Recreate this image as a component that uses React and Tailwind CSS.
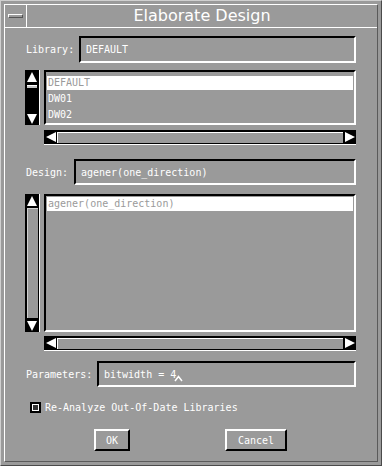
import React from 'react';

const mono = { fontFamily: '"DejaVu Sans Mono", "Liberation Mono", monospace' };

function Arrow({ dir }) {
  const pts = {
    up: '6,1 11,11 1,11',
    down: '1,1 11,1 6,11',
    left: '1,6 11,1 11,11',
    right: '1,1 11,6 1,11',
  }[dir];
  return (
    <svg width="12" height="12" viewBox="0 0 12 12">
      <polygon points={pts} fill="#ffffff" />
    </svg>
  );
}

function Sunken({ className = '', children }) {
  return (
    <div className={`border-2 border-t-black border-l-black border-r-white border-b-white ${className}`}>
      {children}
    </div>
  );
}

function VScroll({ thumb }) {
  return (
    <div className="w-[15px] h-full bg-black border-r border-white flex flex-col items-center">
      <div className="h-[13px] flex items-center justify-center">
        <Arrow dir="up" />
      </div>
      {thumb === 'small' ? (
        <div className="flex-1 w-full flex flex-col items-center pt-[2px]">
          <div className="w-[10px] h-[3px] bg-[#c8c8c8] border-t border-white" />
        </div>
      ) : (
        <div className="flex-1 w-[11px] my-[1px] bg-[#9a9a9a] border-t border-l border-[#cfcfcf]" />
      )}
      <div className="h-[13px] flex items-center justify-center">
        <Arrow dir="down" />
      </div>
    </div>
  );
}

function HScroll() {
  return (
    <div className="ml-[19px] h-[15px] bg-black border-b border-white flex items-center">
      <div className="w-[13px] h-full flex items-center justify-center">
        <Arrow dir="left" />
      </div>
      <div className="flex-1 h-[11px] bg-[#9a9a9a] border-t border-l border-white" />
      <div className="w-[13px] h-full flex items-center justify-center">
        <Arrow dir="right" />
      </div>
    </div>
  );
}

function FieldRow({ label, labelW, value, height, caret }) {
  return (
    <div className="flex items-center">
      <div className="text-white text-[10px] pl-[1px]" style={{ width: labelW }}>
        {label}
      </div>
      <Sunken className="flex-1 flex items-center px-[5px]">
        <div className="flex items-center text-white text-[10px] whitespace-pre" style={{ height: height - 4 }}>
          {value}
          {caret && (
            <svg width="9" height="7" viewBox="0 0 9 7" className="mt-[8px] -ml-[2px]">
              <polyline points="1,6 4.5,1.5 8,6" fill="none" stroke="#ffffff" strokeWidth="1.5" />
            </svg>
          )}
        </div>
      </Sunken>
    </div>
  );
}

function ListBlock({ height, items, thumb, top }) {
  return (
    <div className="flex" style={{ height }}>
      <VScroll thumb={thumb} />
      <Sunken className="ml-[4px] flex-1 px-[1px] overflow-hidden">
        <div style={{ paddingTop: top }}>
          {items.map((it, i) => (
            <div key={i} className="h-[16px] flex items-start">
              <div
                className={`w-full h-[14px] leading-[14px] text-[10px] px-[1px] ${i === 0 ? 'bg-white text-[#9a9a9a]' : 'text-white'}`}
              >
                {it}
              </div>
            </div>
          ))}
        </div>
      </Sunken>
    </div>
  );
}

function Button({ label, width }) {
  return (
    <div
      className="h-[22px] flex items-center justify-center border-2 border-t-white border-l-white border-r-black border-b-black text-white text-[10px]"
      style={{ width }}
    >
      {label}
    </div>
  );
}

export default function App() {
  return (
    <div className="w-[382px] h-[466px] bg-[#9a9a9a] border border-t-[#cfcfcf] border-l-[#cfcfcf] border-r-[#4a4a4a] border-b-[#4a4a4a] p-[3px] overflow-hidden" style={mono}>
      <div className="h-full flex flex-col border border-t-white border-l-white border-r-[#5a5a5a] border-b-[#5a5a5a]">
        <div className="h-[23px] flex border-b border-white">
          <div className="w-[22px] border-r border-white flex items-center justify-center">
            <div className="w-[15px] h-[4px] border border-t-white border-l-white border-r-[#555] border-b-[#555]" />
          </div>
          <div className="flex-1 flex items-center justify-center text-white text-[16px]" style={{ fontFamily: '"DejaVu Sans", "Liberation Sans", sans-serif' }}>
            Elaborate Design
          </div>
        </div>

        <div className="flex-1 flex flex-col pl-[20px] pr-[21px]">
          <div className="mt-[8px]">
            <FieldRow label="Library:" labelW={54} value="DEFAULT" height={27} />
          </div>
          <div className="mt-[7px]">
            <ListBlock height={55} items={['DEFAULT', 'DW01', 'DW02']} thumb="small" top={4} />
          </div>
          <div className="mt-[5px]">
            <HScroll />
          </div>

          <div className="mt-[14px]">
            <FieldRow label="Design:" labelW={49} value="agener(one_direction)" height={26} />
          </div>
          <div className="mt-[9px]">
            <ListBlock height={138} items={['agener(one_direction)']} thumb="full" top={1} />
          </div>
          <div className="mt-[4px]">
            <HScroll />
          </div>

          <div className="mt-[10px]">
            <FieldRow label="Parameters:" labelW={72} value="bitwidth = 4" height={26} caret />
          </div>

          <div className="mt-[14px] flex items-center ml-[5px] h-[12px]">
            <div className="w-[11px] h-[11px] bg-black p-[2px]">
              <div className="w-full h-full border border-white bg-[#333]" />
            </div>
            <div className="ml-[4px] text-white text-[10px]">Re-Analyze Out-Of-Date Libraries</div>
          </div>

          <div className="mt-[16px] flex ml-[69px]">
            <Button label="OK" width={36} />
            <div className="ml-[95px]">
              <Button label="Cancel" width={62} />
            </div>
          </div>
        </div>
      </div>
    </div>
  );
}
